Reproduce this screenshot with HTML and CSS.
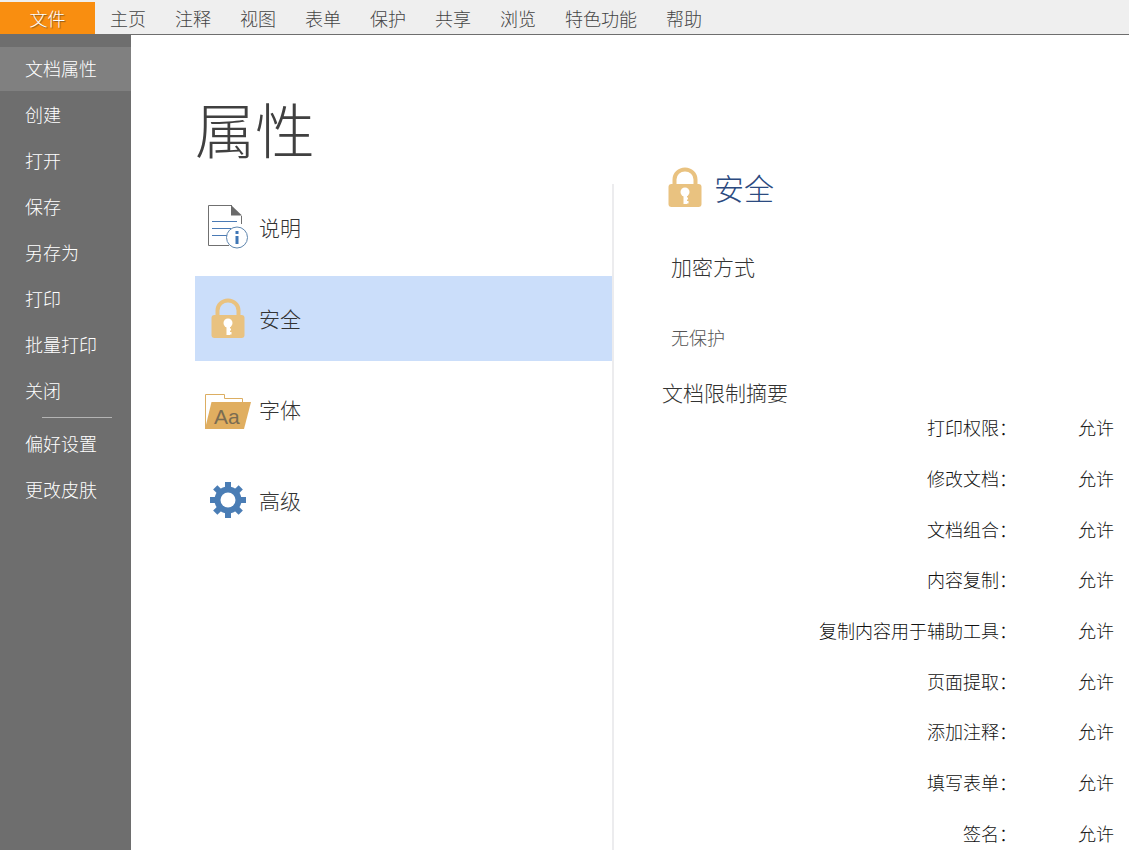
FILE: index.html
```html
<!DOCTYPE html>
<html lang="zh-CN">
<head>
<meta charset="utf-8">
<title>属性</title>
<link rel="stylesheet" href="styles.css">
</head>
<body>
<svg class="defs" width="0" height="0" aria-hidden="true">
  <symbol id="lock" viewBox="0 0 34 42">
    <path d="M4.500 19V13.500a12.500 12 0 0 1 25 0V19H25.500V13.500a8.500 8 0 0 0-17 0V19z" fill="#e9c280"/>
    <rect x="0.500" y="18" width="33" height="23" rx="3" fill="#e9c280"/>
    <circle cx="17" cy="26" r="4.500" class="keyhole"/>
    <path d="M15.500 29h3.500v2.500h1v2h-1v1.500h1.500v2.500H19V38h-3.500z" class="keyhole"/>
  </symbol>
</svg>
<header class="ribbon">
  <button class="file-tab">文件</button>
  <nav class="tabs">
    <button>主页</button><button>注释</button><button>视图</button><button>表单</button><button>保护</button><button>共享</button><button>浏览</button><button>特色功能</button><button>帮助</button>
  </nav>
</header>
<div class="backstage">
  <nav class="sidebar">
    <button class="current">文档属性</button>
    <button>创建</button>
    <button>打开</button>
    <button>保存</button>
    <button>另存为</button>
    <button>打印</button>
    <button>批量打印</button>
    <button>关闭</button>
    <hr>
    <button>偏好设置</button>
    <button>更改皮肤</button>
  </nav>
  <main class="main">
    <section class="overview">
      <h1>属性</h1>
      <div class="categories">
        <button>
          <svg width="48" height="48" viewBox="0 0 48 48" aria-hidden="true">
            <path d="M27 2.500H3.500V42.500H24M36.500 13V21" fill="none" stroke="#707070"/>
            <path d="M26 2L37 12.500H26z" fill="#6a6a6a"/>
            <path d="M7 18.500H32M7 25.500H26M7 32.500H22" fill="none" stroke="#4a7ab5"/>
            <circle cx="32" cy="34.500" r="10.500" fill="#fff" stroke="#5f86ae"/>
            <rect x="30.500" y="28" width="3" height="3" fill="#3f76b5"/>
            <rect x="30.500" y="33" width="3" height="8" fill="#3f76b5"/>
          </svg>
          <span>说明</span>
        </button>
        <button class="selected">
          <svg width="48" height="48" viewBox="0 0 48 48" aria-hidden="true"><use href="#lock" x="6" y="3" width="34" height="42"/></svg>
          <span>安全</span>
        </button>
        <button>
          <svg width="48" height="48" viewBox="0 0 48 48" aria-hidden="true">
            <path d="M0.500 44V9.500H19.500V13.500H37.500V18" fill="none" stroke="#dcae62"/>
            <path d="M6.500 17H46L39 44H0z" fill="#e0ae60"/>
            <text x="9" y="39" class="sample">Aa</text>
          </svg>
          <span>字体</span>
        </button>
        <button>
          <svg width="48" height="48" viewBox="0 0 48 48" aria-hidden="true">
            <g fill="#4a7db5">
              <path d="M20 6h6v36h-6z"/>
              <path d="M20 6h6v36h-6z" transform="rotate(45 23 24)"/>
              <path d="M20 6h6v36h-6z" transform="rotate(90 23 24)"/>
              <path d="M20 6h6v36h-6z" transform="rotate(135 23 24)"/>
              <circle cx="23" cy="24" r="13.500"/>
            </g>
            <circle cx="23" cy="24" r="7.500" fill="#fff"/>
          </svg>
          <span>高级</span>
        </button>
      </div>
    </section>
    <section class="details">
      <h2><svg width="34" height="42" aria-hidden="true"><use href="#lock"/></svg>安全</h2>
      <h3 class="method">加密方式</h3>
      <p>无保护</p>
      <h3>文档限制摘要</h3>
      <table>
        <tr><th scope="row">打印权限：</th><td>允许</td></tr>
        <tr><th scope="row">修改文档：</th><td>允许</td></tr>
        <tr><th scope="row">文档组合：</th><td>允许</td></tr>
        <tr><th scope="row">内容复制：</th><td>允许</td></tr>
        <tr><th scope="row">复制内容用于辅助工具：</th><td>允许</td></tr>
        <tr><th scope="row">页面提取：</th><td>允许</td></tr>
        <tr><th scope="row">添加注释：</th><td>允许</td></tr>
        <tr><th scope="row">填写表单：</th><td>允许</td></tr>
        <tr><th scope="row">签名：</th><td>允许</td></tr>
      </table>
    </section>
  </main>
</div>
</body>
</html>
```
FILE: styles.css
```css
* { box-sizing: border-box; }
body {
  margin: 0;
  min-height: 100vh;
  display: flex;
  flex-direction: column;
  background: #fff;
  color: #333;
  font: 300 18px/24px "Noto Sans CJK SC Light", "Noto Sans CJK SC", sans-serif;
}
button {
  border: 0;
  padding: 0;
  background: none;
  color: inherit;
  font: inherit;
  text-align: left;
  white-space: nowrap;
  cursor: pointer;
}
h1, h2, h3, p { margin: 0; font-weight: 300; }
.defs { position: absolute; }

.ribbon {
  display: flex;
  height: 35px;
  padding-top: 2px;
  background: #efefef;
  border-bottom: 1px solid #6e6e6e;
}
.file-tab {
  width: 95px;
  background: #f98e10;
  color: #fff;
  text-align: center;
  text-shadow: 1px 1px 1px #8a5a20;
}
.tabs { display: flex; gap: 29px; padding-left: 15px; color: #444; }

.backstage { flex: 1; display: flex; }
.sidebar {
  flex: 0 0 131px;
  display: flex;
  flex-direction: column;
  gap: 2px;
  padding-top: 12px;
  background: #6e6e6e;
  color: #fff;
}
.sidebar button { height: 44px; padding: 0 0 2px 25px; }
.sidebar .current { background: #808080; }
.sidebar hr {
  width: 70px;
  height: 1px;
  margin: 2px 19px 2px auto;
  border: 0;
  background: #b4b4b4;
}

.main { flex: 1; display: flex; padding-left: 64px; }
.overview { flex: 0 1 419px; display: flex; flex-direction: column; padding-top: 57px; }
h1 { margin-bottom: 20px; font-size: 60px; line-height: 72px; color: #404040; }
.categories {
  flex: 1;
  display: flex;
  flex-direction: column;
  gap: 6px;
  padding-top: 1px;
  border-right: 2px solid #ececee;
}
.categories button {
  display: flex;
  align-items: center;
  gap: 6px;
  height: 85px;
  padding: 0 0 2px 10px;
  font-size: 21px;
}
.categories .selected { background: #cbdefa; }
.keyhole { fill: #fff; }
.sample { font: 21px "Liberation Sans", sans-serif; fill: #7a6c52; }

.details { flex: 1; padding: 131px 15px 4px 48px; }
h2 {
  display: flex;
  align-items: center;
  gap: 12px;
  padding-left: 6px;
  font-size: 30px;
  line-height: 42px;
  color: #2b4a80;
}
h3 { font-size: 21px; line-height: 30px; }
.method { margin: 43px 0 44px; padding-left: 9px; }
.details p { margin-bottom: 28px; padding-left: 9px; color: #555; }
table { width: 100%; margin-top: 8px; border-collapse: collapse; color: #111; }
tr { height: 51px; vertical-align: top; }
tr:nth-child(3n) { height: 50px; }
tr:last-child { height: auto; }
th { padding: 0; font-weight: 300; text-align: right; }
td { width: 97px; padding: 0; text-align: right; }
```
